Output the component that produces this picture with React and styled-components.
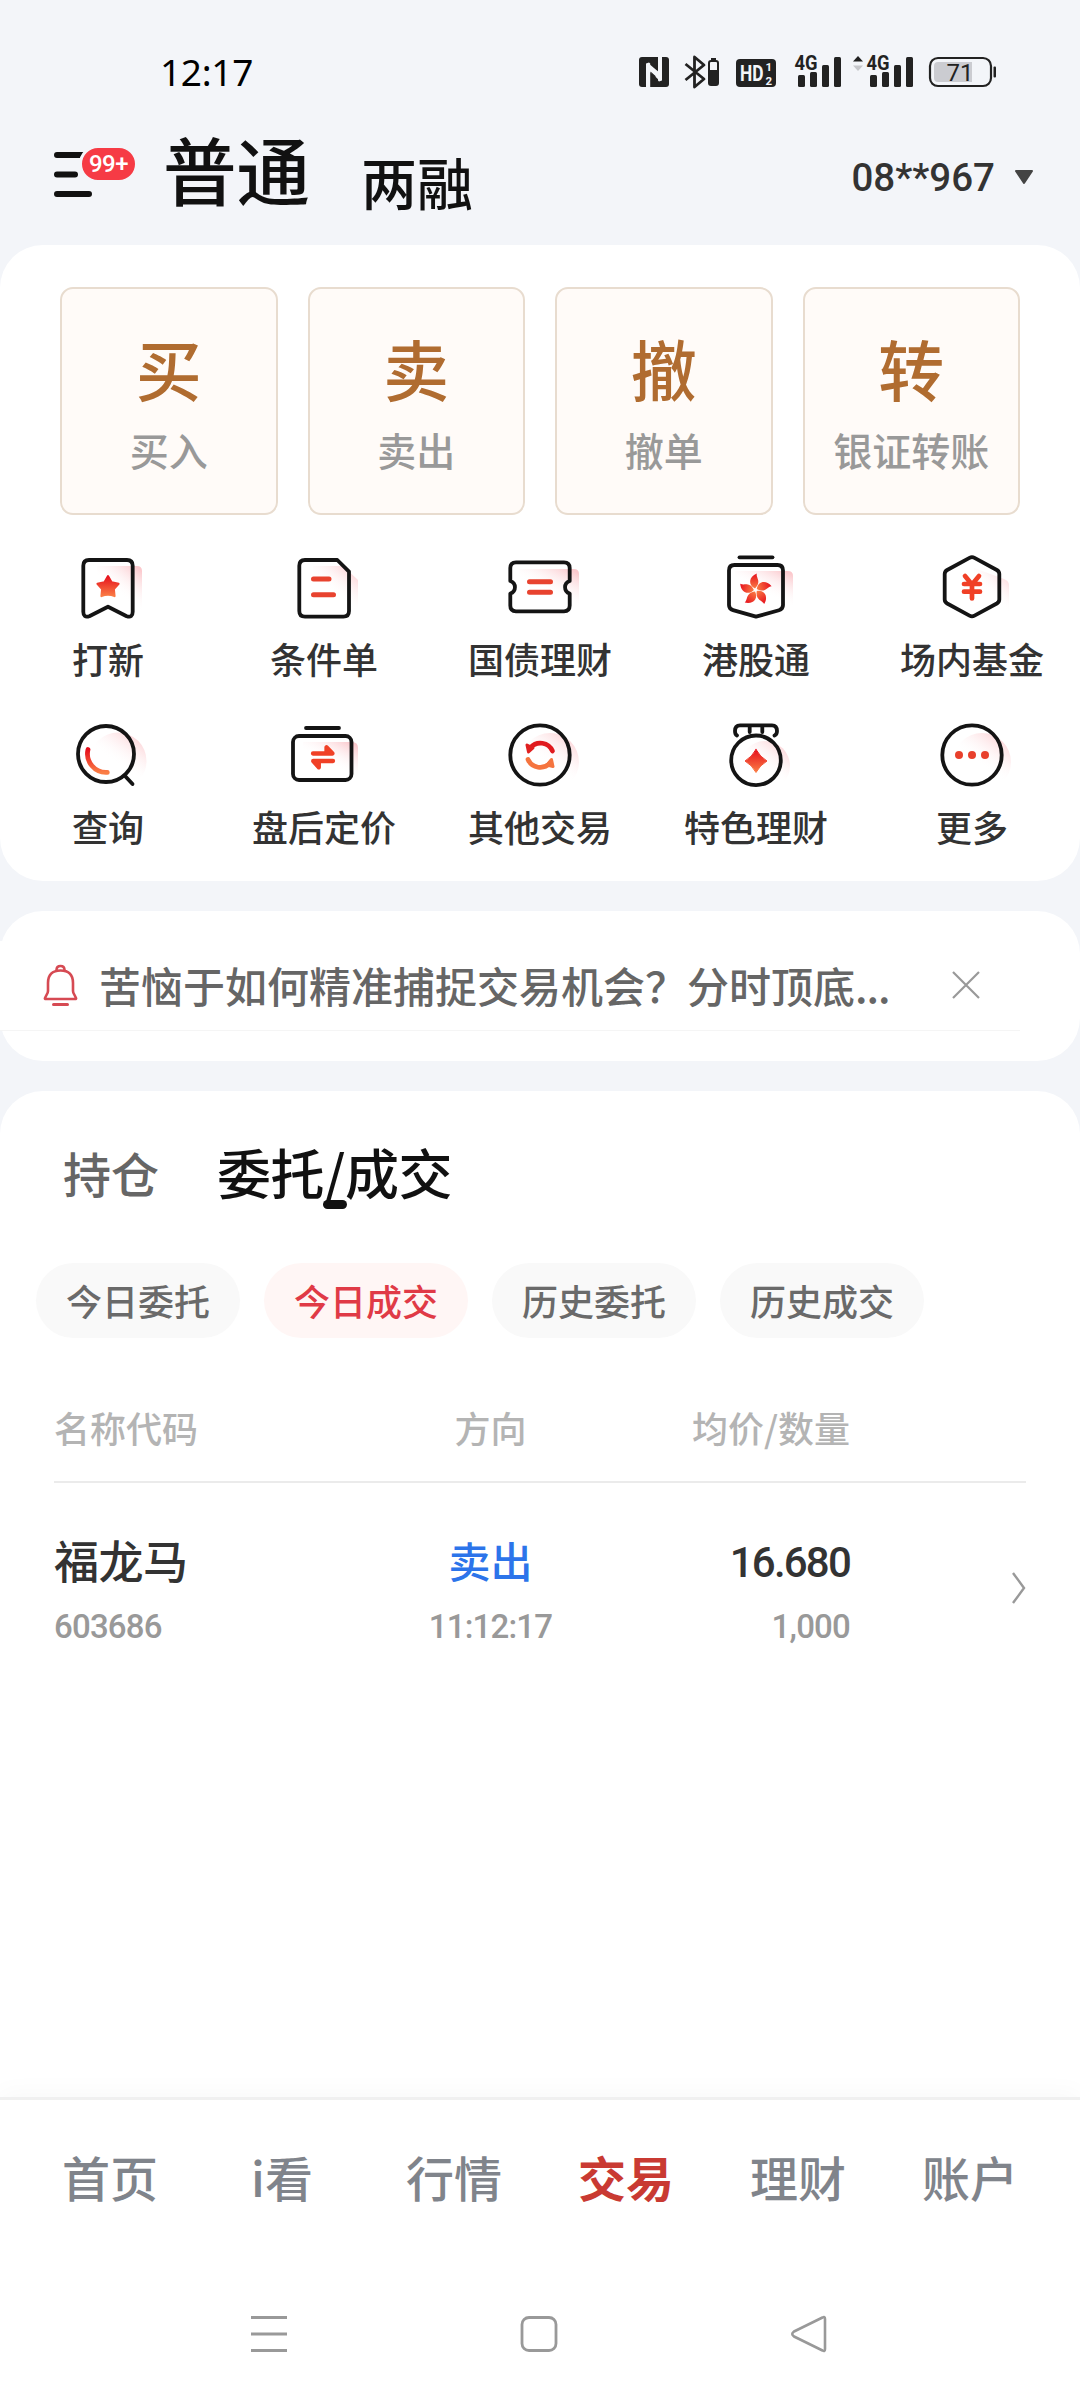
import React from 'react';
import styled, { createGlobalStyle } from 'styled-components';

const GlobalStyle = createGlobalStyle`
  * {
    box-sizing: border-box;
  }
  body {
    margin: 0;
    background: #f3f5f9;
    font-family: "Noto Sans CJK SC", sans-serif;
    font-weight: 500;
  }
`;

const Page = styled.div`
  width: 1080px;
  height: 2400px;
  display: flex;
  flex-direction: column;
  background: #f3f5f9;
  overflow: hidden;
`;

const StatusBar = styled.div`
  height: 110px;
  flex: none;
  display: flex;
  justify-content: space-between;
  padding: 51px 84px 0 160px;
`;

const Clock = styled.div`
  margin-top: -1px;
  font-family: "Noto Sans", sans-serif;
  font-size: 37px;
  font-weight: 400;
  line-height: 43px;
  letter-spacing: -0.3px;
  color: #000;
`;

const StatusIcons = styled.svg`
  width: 360px;
  height: 40px;
  display: block;
`;

const Header = styled.header`
  height: 135px;
  flex: none;
  display: flex;
  align-items: flex-start;
  padding: 0 46px 0 54px;
`;

const MenuButton = styled.div`
  position: relative;
  width: 109px;
  margin-top: 42px;
  line-height: 0;
`;

const Badge = styled.span`
  position: absolute;
  left: 25px;
  top: -7px;
  width: 59px;
  height: 38px;
  border: 3px solid #f3f5f9;
  border-radius: 20px;
  background: #f63b45;
  color: #fff;
  font-family: Roboto, sans-serif;
  font-size: 24px;
  font-weight: 500;
  letter-spacing: -0.5px;
  line-height: 33px;
  text-align: center;
`;

const AccountTab = styled.div`
  font-size: ${(p) => (p.$active ? '73.5px' : '56px')};
  margin-top: ${(p) => (p.$active ? '22px' : '43px')};
  margin-right: 51px;
  line-height: 1;
  color: #111;
`;

const Account = styled.div`
  margin: 45px 0 0 auto;
  display: flex;
  align-items: center;
  gap: 19px;
  font-family: Roboto, sans-serif;
  font-size: 38.5px;
  line-height: 45px;
  color: #333;
`;

const Panel = styled.section`
  flex: ${(p) => (p.$grow ? '1' : 'none')};
  background: #fff;
  border-radius: ${(p) => (p.$grow ? '43px 43px 0 0' : '43px')};
  margin-bottom: ${(p) => (p.$grow ? '0' : '30px')};
`;

const TradePanel = styled(Panel)`
  height: 636px;
  padding-top: 42px;
`;

const Cards = styled.div`
  display: grid;
  grid-template-columns: repeat(4, 1fr);
  gap: 30px;
  padding: 0 60px;
`;

const Card = styled.div`
  height: 228px;
  padding-top: 45px;
  display: flex;
  flex-direction: column;
  align-items: center;
  gap: 30px;
  border: 2px solid #e8dccf;
  border-radius: 13px;
  background: #fffbf8;
`;

const CardGlyph = styled.div`
  font-size: 66px;
  line-height: 1;
  color: #b06c30;
`;

const CardLabel = styled.div`
  font-size: 39px;
  line-height: 1;
  color: #999;
`;

const Shortcuts = styled.div`
  display: grid;
  grid-template-columns: repeat(5, 216px);
  row-gap: 44px;
  margin-top: 37px;
`;

const Shortcut = styled.div`
  display: flex;
  flex-direction: column;
  align-items: center;
  gap: 16px;
`;

const ShortcutIcon = styled.svg`
  width: 72px;
  height: 72px;
  overflow: visible;
  fill: none;
  stroke: #141414;
  stroke-width: 3.8;
  stroke-linecap: round;
  stroke-linejoin: round;
`;

const ShortcutLabel = styled.div`
  font-size: 36px;
  line-height: 1;
  color: #333;
  white-space: nowrap;
`;

const NoticePanel = styled(Panel)`
  height: 150px;
  padding: 30px 60px 0 0;
`;

const Notice = styled.div`
  height: 90px;
  display: flex;
  align-items: center;
  padding: 0 40px 2px 43px;
  border-bottom: 1px solid #f5f5f5;
  background: #fff;
`;

const NoticeText = styled.div`
  flex: 1;
  margin-left: 21px;
  font-size: 42px;
  line-height: 1;
  color: #666;
  white-space: nowrap;
`;

const Dots = styled.span`
  letter-spacing: -1px;
`;

const Tabs = styled.div`
  display: flex;
  align-items: flex-start;
  padding: 54px 63px 0;
  gap: 58px;
`;

const Tab = styled.div`
  display: flex;
  flex-direction: column;
  align-items: center;
  margin-top: ${(p) => (p.$active ? '0' : '3px')};
  font-size: ${(p) => (p.$active ? '54px' : '48px')};
  letter-spacing: ${(p) => (p.$active ? '-0.4px' : '0')};
  line-height: 1;
  color: ${(p) => (p.$active ? '#111' : '#666')};
`;

const Indicator = styled.i`
  width: 24px;
  height: 9px;
  margin-top: 1px;
  border-radius: 5px;
  background: #111;
`;

const Chips = styled.div`
  display: flex;
  gap: 24px;
  padding: 54px 36px 0;
`;

const Chip = styled.div`
  width: 204px;
  height: 75px;
  border-radius: 38px;
  font-size: 36px;
  line-height: 74px;
  text-align: center;
  background: ${(p) => (p.$active ? '#fff6f5' : '#f9f9f9')};
  color: ${(p) => (p.$active ? '#e03a46' : '#6a6a6a')};
`;

const Columns = styled.div`
  display: grid;
  grid-template-columns: 296px 281px 219px 176px;
  margin: 0 54px;
`;

const TableHead = styled(Columns)`
  padding: 71px 0 36px;
  border-bottom: 2px solid #ebebeb;
  font-size: 36px;
  line-height: 1;
  color: #b4b4b4;
`;

const TableRow = styled(Columns)`
  padding-top: 54px;
`;

const Cell = styled.div`
  text-align: ${(p) => p.$align || 'left'};
`;

const Name = styled.div`
  font-size: 45px;
  line-height: 45px;
  letter-spacing: -0.5px;
  color: #333;
`;

const Side = styled.div`
  font-size: 42px;
  line-height: 45px;
  color: #2c74ea;
`;

const Price = styled.div`
  padding-top: 3px;
  height: 45px;
  font-family: Roboto, sans-serif;
  font-size: 42px;
  line-height: 45px;
  letter-spacing: -1.8px;
  color: #333;
`;

const Minor = styled.div`
  margin-top: 28px;
  font-family: Roboto, sans-serif;
  font-size: 33px;
  line-height: 33px;
  letter-spacing: -0.8px;
  color: #999;
`;

const Arrow = styled.div`
  padding-top: 35px;
  text-align: right;
  line-height: 0;
`;

const Footer = styled.footer`
  height: 303px;
  flex: none;
  border-top: 3px solid #f0f0f0;
  background: #fff;
  box-shadow: 0 -4px 24px rgba(0, 0, 0, 0.03);
`;

const NavTabs = styled.nav`
  height: 152px;
  display: grid;
  grid-template-columns: repeat(6, 1fr);
  align-items: center;
  padding: 0 24px;
`;

const NavTab = styled.div`
  font-size: 48px;
  line-height: 1;
  text-align: center;
  color: ${(p) => (p.$active ? '#c93a32' : '#80848b')};
  font-weight: ${(p) => (p.$active ? '700' : '500')};
`;

const SystemBar = styled.div`
  display: flex;
  padding: 62px 136px 0 134px;
`;

const SystemKey = styled.div`
  flex: 1;
  display: flex;
  justify-content: center;
`;

const RED = 'url(#red)';

const icons = {
  bookmark: (
    <>
      <path d="M25 14h40q5 0 5 5v45h-45z" fill="url(#blush)" stroke="none" />
      <path d="M17 8h38q5.700 0 5.700 5.700v46q0 6.500-6 4.500L36 54.700 17.300 64.200q-6 2-6-4.500v-46Q11.300 8 17 8z" />
      <path d="M36 24l3.600 6.200 7 1.600-4.700 5.400.700 7q-6.600-3-13.200 0l.700-7-4.700-5.400 7-1.600z" fill={RED} stroke={RED} strokeWidth="2" />
    </>
  ),
  doc: (
    <>
      <path d="M25 14h30l15 14v36H25z" fill="url(#blush)" stroke="none" />
      <path d="M17 8h32.300L61 19.700V59q0 5.700-5.700 5.700H17q-5.700 0-5.700-5.700V13.700Q11.300 8 17 8z" />
      <path d="M25.500 27H41M25.500 42.700h20" stroke="#e8432f" strokeWidth="5" />
    </>
  ),
  ticket: (
    <>
      <path d="M15 17h55q5 0 5 5v38H15z" fill="url(#blush)" stroke="none" />
      <path d="M12 10.300h48q5.700 0 5.700 5.700v13a6.600 6.600 0 0 0 0 12.600v12q0 5.700-5.700 5.700H12q-5.700 0-5.700-5.700v-12a6.600 6.600 0 0 0 0-12.600V16q0-5.700 5.700-5.700z" />
      <path d="M25.500 29.700h21M25.500 40.300h21" stroke="#e8432f" strokeWidth="5" />
    </>
  ),
  hongkong: (
    <>
      <path d="M15 19h53q5 0 5 5v34H15z" fill="url(#blush)" stroke="none" />
      <path d="M19.500 5.300h33" />
      <path d="M14.500 13h43q5.500 0 5.500 5.500V53q0 4-4 5.200L36 64.700 13 58.200Q9 57 9 53V18.500Q9 13 14.500 13z" />
      <g fill={RED} stroke="none">
        {[0, 72, 144, 216, 288].map((a) => (
          <path key={a} d="M35 36.500C28 33 28.500 25 36.800 21.500 35.800 26 42 29.500 35 36.500z" transform={`rotate(${a} 35.500 38)`} />
        ))}
      </g>
    </>
  ),
  fund: (
    <>
      <path d="M38 16l30 11q5 2 5 6v31H38z" fill="url(#blush)" stroke="none" />
      <path d="M38.500 5.800L60.800 18q2.500 1.500 2.500 4v25.500q0 2.500-2.500 4L38.500 63.600q-2.500 1.400-5 0L11.200 51.500q-2.500-1.500-2.500-4V22q0-2.500 2.500-4L33.500 5.800q2.500-1.400 5 0z" />
      <path d="M29 24l7 8.500 7-8.500M28 32h16M28 39.700h16M36 33v13.500" stroke="#f04026" strokeWidth="4.700" />
    </>
  ),
  search: (
    <>
      <circle cx="46" cy="41" r="28.500" fill="url(#blush)" stroke="none" />
      <circle cx="34" cy="34" r="28" />
      <path d="M53.500 56.500l7 7.500" />
      <path d="M16 29.500A18.600 18.600 0 0 0 35.300 52.300" stroke={RED} strokeWidth="4.800" />
    </>
  ),
  fixed: (
    <>
      <path d="M15 22h49q6 0 6 6v34H15z" fill="url(#blush)" stroke="none" />
      <path d="M18 8h33" />
      <rect x="5" y="16" width="58.500" height="44" rx="6" />
      <path d="M25 33.500h19.500l-6-6.300v6M45 41H25.200l5.600 6.300v-6" stroke="#f04026" strokeWidth="4.300" />
    </>
  ),
  swap: (
    <>
      <circle cx="46" cy="42" r="29" fill="url(#blush)" stroke="none" />
      <circle cx="36" cy="35" r="29.700" />
      <path d="M26.500 27.500A13.300 13.300 0 0 1 48.500 31" stroke="#e01a1e" strokeWidth="4.700" />
      <path d="M24 39.500A13.300 13.300 0 0 0 46 43" stroke="#f5743f" strokeWidth="4.700" />
      <path d="M23 25l1.500 7 4.500-4z" fill="#e02020" stroke="#e02020" strokeWidth="3" />
      <path d="M47.500 39.500l1.500 7-6-1.500z" fill="#f5743f" stroke="#f5743f" strokeWidth="3" />
    </>
  ),
  medal: (
    <>
      <circle cx="45" cy="46" r="25" fill="url(#blush)" stroke="none" />
      <circle cx="36" cy="40.300" r="24.800" />
      <path d="M17 15.500q-2-1-2-4.500 0-5.700 5-5.700h32q5 0 5 5.700 0 3.500-2.500 4.500M29.700 6v6M42.300 6v6" />
      <path d="M36 29.500q4 7.500 11 11.500-7 4-11 11.500-4-7.500-11-11.500 7-4 11-11.500z" fill={RED} stroke={RED} strokeWidth="1" />
    </>
  ),
  more: (
    <>
      <circle cx="46" cy="42" r="29" fill="url(#blush)" stroke="none" />
      <circle cx="36" cy="35" r="29.700" />
      <g fill="#e8402c" stroke="none">
        <circle cx="23" cy="35" r="4" />
        <circle cx="36" cy="35" r="4" />
        <circle cx="49" cy="35" r="4" />
      </g>
    </>
  ),
};

const cards = [
  ['买', '买入'],
  ['卖', '卖出'],
  ['撤', '撤单'],
  ['转', '银证转账'],
];

const shortcuts = [
  ['bookmark', '打新'],
  ['doc', '条件单'],
  ['ticket', '国债理财'],
  ['hongkong', '港股通'],
  ['fund', '场内基金'],
  ['search', '查询'],
  ['fixed', '盘后定价'],
  ['swap', '其他交易'],
  ['medal', '特色理财'],
  ['more', '更多'],
];

const chips = ['今日委托', '今日成交', '历史委托', '历史成交'];
const navTabs = ['首页', 'i看', '行情', '交易', '理财', '账户'];

const Defs = () => (
  <svg width="0" height="0" style={{ position: 'absolute' }}>
    <defs>
      <linearGradient id="red" x1="0" y1="0" x2="0" y2="1">
        <stop offset="0" stopColor="#e60f1c" />
        <stop offset="1" stopColor="#fa7d45" />
      </linearGradient>
      <linearGradient id="blush" x1="1" y1="0.1" x2="0.6" y2="0.65">
        <stop offset="0" stopColor="#fbc9cd" />
        <stop offset="1" stopColor="#fff" stopOpacity="0" />
      </linearGradient>
    </defs>
  </svg>
);

const Signal = ({ x }) => (
  <g transform={`translate(${x} 0)`}>
    <text x="-0.500" y="19" fontSize="20" fontWeight="700" textLength="23" lengthAdjust="spacingAndGlyphs">4G</text>
    <rect x="3" y="24" width="7" height="12" rx="1.500" />
    <rect x="15" y="21" width="7" height="15" rx="1.500" />
    <rect x="27" y="14" width="7" height="22" rx="1.500" />
    <rect x="39" y="6" width="7" height="30" rx="1.500" />
  </g>
);

const StatusRow = () => (
  <StatusIcons viewBox="0 0 360 40" fill="#222" fontFamily="Roboto, sans-serif">
    <rect x="3" y="6" width="30" height="30" rx="3" />
    <path d="M10 36V12.500l3-1 1.200 1v23.500M22 6v23.500l1 1 3-1V6" fill="#f3f5f9" />
    <path d="M12 12l12 10v8L12 19z" fill="#f3f5f9" />
    <path d="M14.500 20.500l5 4.500v6zM21.500 19.500l-4.500-4V11z" />
    <path d="M49.500 13l18.500 15-9.500 8V6l9.500 8-18.500 15" fill="none" stroke="#222" strokeWidth="2.800" strokeLinejoin="round" />
    <rect x="73" y="10" width="9" height="24" rx="2" fill="none" stroke="#222" strokeWidth="2" />
    <rect x="73" y="19" width="9" height="15" />
    <rect x="75" y="7" width="5" height="2" />
    <rect x="100" y="8" width="40" height="28" rx="4" />
    <g fill="#f3f5f9" fontWeight="700">
      <text x="104" y="30" fontSize="22" textLength="23.500" lengthAdjust="spacingAndGlyphs">HD</text>
      <text x="129.500" y="20" fontSize="11.500">1</text>
      <text x="129.500" y="34" fontSize="11.500">2</text>
    </g>
    <Signal x={159} />
    <path d="M222 5l5 5.500h-10z" />
    <path d="M222 20l5-5.500h-10z" fill="#c6c7cb" />
    <Signal x={231} />
    <rect x="294" y="7" width="61" height="28" rx="8" fill="none" stroke="#222" strokeWidth="2.200" />
    <path d="M302 11h34v20h-34q-4 0-4-4V15q0-4 4-4z" fill="#cbccd1" />
    <rect x="357.500" y="15.500" width="2.500" height="11" rx="1" />
    <text x="310.500" y="30" fontSize="24" fontWeight="400">71</text>
  </StatusIcons>
);

const App = () => {
  return (
    <Page>
      <GlobalStyle />
      <Defs />
      <StatusBar>
        <Clock>12:17</Clock>
        <StatusRow />
      </StatusBar>

      <Header>
        <MenuButton>
          <svg width="40" height="46" stroke="#111" strokeWidth="6" strokeLinecap="round">
            <path d="M3 3h26M3 22.500h18M3 42h32" />
          </svg>
          <Badge>99+</Badge>
        </MenuButton>
        <AccountTab $active>普通</AccountTab>
        <AccountTab>两融</AccountTab>
        <Account>
          08**967
          <svg width="20" height="15">
            <path d="M2 1h16L10 13z" fill="#444" stroke="#444" strokeWidth="2" strokeLinejoin="round" />
          </svg>
        </Account>
      </Header>

      <TradePanel>
        <Cards>
          {cards.map(([glyph, label]) => (
            <Card key={glyph}>
              <CardGlyph>{glyph}</CardGlyph>
              <CardLabel>{label}</CardLabel>
            </Card>
          ))}
        </Cards>
        <Shortcuts>
          {shortcuts.map(([icon, label]) => (
            <Shortcut key={icon}>
              <ShortcutIcon viewBox="0 0 72 72">{icons[icon]}</ShortcutIcon>
              <ShortcutLabel>{label}</ShortcutLabel>
            </Shortcut>
          ))}
        </Shortcuts>
      </TradePanel>

      <NoticePanel>
        <Notice>
          <svg width="35" height="44" viewBox="0 0 35 44" fill="none" stroke="#d64a53" strokeWidth="2.600" strokeLinecap="round" strokeLinejoin="round">
            <path d="M5 28V20Q5 7.500 17.500 7.500T30 20v8q0 2 1.500 4l1.500 3q.5 1-1 1H3q-1.500 0-1-1l1.500-3Q5 30 5 28z" />
            <path d="M13.500 7q0-4 4-4t4 4" />
            <path d="M10.500 41.500h14" strokeWidth="3" />
          </svg>
          <NoticeText>
            苦恼于如何精准捕捉交易机会？分时顶底<Dots>...</Dots>
          </NoticeText>
          <svg width="28" height="28" stroke="#999" strokeWidth="2.200">
            <path d="M1 1l26 26M27 1L1 27" />
          </svg>
        </Notice>
      </NoticePanel>

      <Panel $grow>
        <Tabs>
          <Tab>持仓</Tab>
          <Tab $active>
            委托/成交
            <Indicator />
          </Tab>
        </Tabs>
        <Chips>
          {chips.map((chip) => (
            <Chip key={chip} $active={chip === '今日成交'}>{chip}</Chip>
          ))}
        </Chips>
        <TableHead>
          <Cell>名称代码</Cell>
          <Cell $align="center">方向</Cell>
          <Cell $align="right">均价/数量</Cell>
        </TableHead>
        <TableRow>
          <Cell>
            <Name>福龙马</Name>
            <Minor>603686</Minor>
          </Cell>
          <Cell $align="center">
            <Side>卖出</Side>
            <Minor>11:12:17</Minor>
          </Cell>
          <Cell $align="right">
            <Price>16.680</Price>
            <Minor>1,000</Minor>
          </Cell>
          <Arrow>
            <svg width="15" height="32" fill="none" stroke="#999" strokeWidth="2.400">
              <path d="M2 1l11 15L2 31" />
            </svg>
          </Arrow>
        </TableRow>
      </Panel>

      <Footer>
        <NavTabs>
          {navTabs.map((tab) => (
            <NavTab key={tab} $active={tab === '交易'}>{tab}</NavTab>
          ))}
        </NavTabs>
        <SystemBar>
          <SystemKey>
            <svg width="38" height="40" stroke="#999" strokeWidth="3">
              <path d="M1 3.500h36M1 20h36M1 36.500h36" />
            </svg>
          </SystemKey>
          <SystemKey>
            <svg width="38" height="40" fill="none" stroke="#999" strokeWidth="2.800">
              <rect x="2" y="3.500" width="34" height="33" rx="7" />
            </svg>
          </SystemKey>
          <SystemKey>
            <svg width="38" height="40" fill="none" stroke="#999" strokeWidth="2.600" strokeLinejoin="round">
              <path d="M32.500 3.500q2.500-1.500 2.500 1.500v30q0 3-2.500 1.500L4 22.500q-3.500-2.500 0-5z" />
            </svg>
          </SystemKey>
        </SystemBar>
      </Footer>
    </Page>
  );
};

export default App;
